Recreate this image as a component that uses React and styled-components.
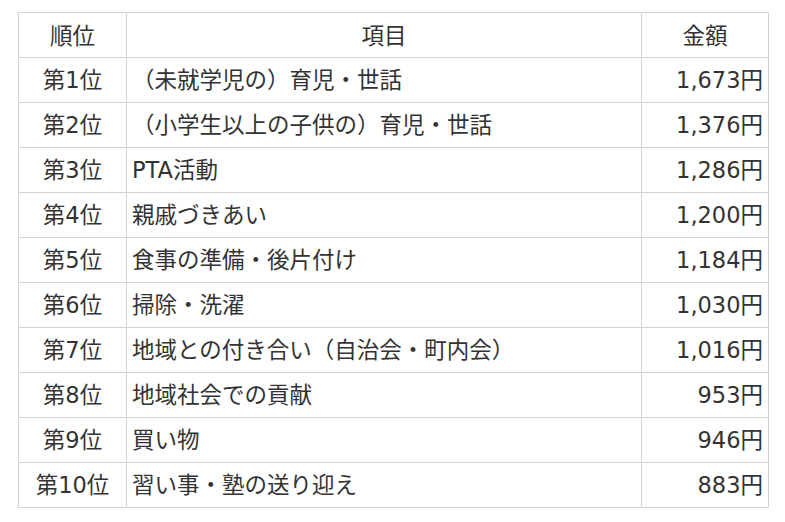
import React from "react";
import styled, { createGlobalStyle } from "styled-components";

const GlobalStyle = createGlobalStyle`
  html, body {
    margin: 0;
    padding: 0;
    background: #fff;
  }
  body {
    font-family: "DejaVu Sans", "Noto Sans CJK JP", sans-serif;
    color: #333;
  }
`;

const Page = styled.div`
  padding: 12px 0 0 18px;
`;

const Table = styled.table`
  border-collapse: collapse;
  table-layout: fixed;
  width: 750px;
  font-size: 22.5px;
  line-height: 1;
`;

const Col = styled.col`
  width: ${(p) => p.w}px;
`;

const Th = styled.th`
  box-sizing: border-box;
  height: 45px;
  padding: 2px 5px 0;
  border: 1px solid #d3d3d3;
  font-weight: normal;
  text-align: center;
`;

const Td = styled.td`
  box-sizing: border-box;
  height: 45px;
  padding: 1px 5px 0;
  border: 1px solid #d3d3d3;
  text-align: ${(p) => p.align || "left"};
  white-space: nowrap;
`;

const rows = [
  ["第1位", "（未就学児の）育児・世話", "1,673円"],
  ["第2位", "（小学生以上の子供の）育児・世話", "1,376円"],
  ["第3位", "PTA活動", "1,286円"],
  ["第4位", "親戚づきあい", "1,200円"],
  ["第5位", "食事の準備・後片付け", "1,184円"],
  ["第6位", "掃除・洗濯", "1,030円"],
  ["第7位", "地域との付き合い（自治会・町内会）", "1,016円"],
  ["第8位", "地域社会での貢献", "953円"],
  ["第9位", "買い物", "946円"],
  ["第10位", "習い事・塾の送り迎え", "883円"],
];

const App = () => {
  return (
    <Page>
      <GlobalStyle />
      <Table>
        <colgroup>
          <Col w={108} />
          <Col w={515} />
          <Col w={127} />
        </colgroup>
        <thead>
          <tr>
            <Th>順位</Th>
            <Th>項目</Th>
            <Th>金額</Th>
          </tr>
        </thead>
        <tbody>
          {rows.map(([rank, item, amount]) => (
            <tr key={rank}>
              <Td align="center">{rank}</Td>
              <Td>{item}</Td>
              <Td align="right">{amount}</Td>
            </tr>
          ))}
        </tbody>
      </Table>
    </Page>
  );
};

export default App;
